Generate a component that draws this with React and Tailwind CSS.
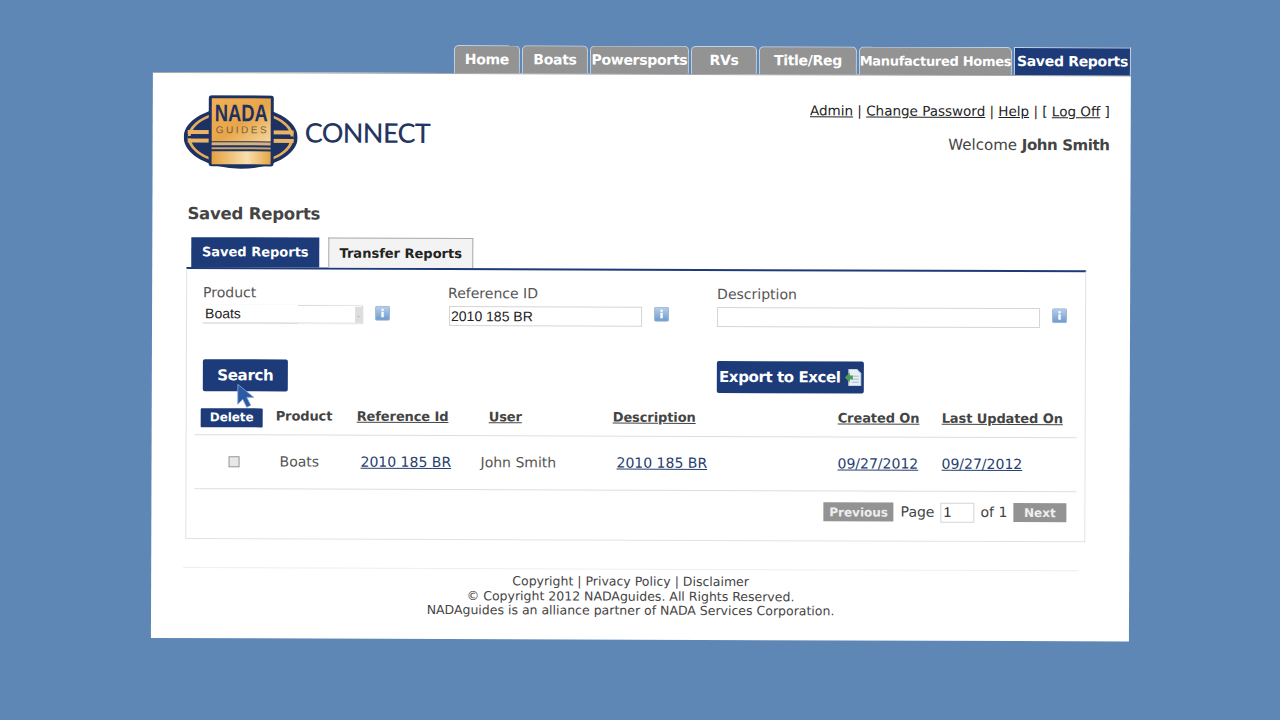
import React from "react";

const NAV_TABS = [
  { label: "Home", width: "w-[66px]", text: "text-[14px]" },
  { label: "Boats", width: "w-[66px]", text: "text-[14px]" },
  { label: "Powersports", width: "w-[99px]", text: "text-[14px]" },
  { label: "RVs", width: "w-[66px]", text: "text-[14px]" },
  { label: "Title/Reg", width: "w-[98px]", text: "text-[14px]" },
  { label: "Manufactured Homes", width: "w-[153px]", text: "text-[13px]" },
];

const InfoIcon = () => (
  <svg width="15" height="15" viewBox="0 0 15 15" className="shrink-0">
    <defs>
      <linearGradient id="infoGrad" x1="0" y1="0" x2="0" y2="1">
        <stop offset="0" stopColor="#b9d0ea" />
        <stop offset="1" stopColor="#6d9acb" />
      </linearGradient>
    </defs>
    <rect x="0.5" y="0.5" width="14" height="14" rx="1.5" fill="url(#infoGrad)" stroke="#9db8d6" />
    <rect x="6.3" y="3" width="2.4" height="2" fill="#fff" />
    <rect x="6.3" y="6" width="2.4" height="5.5" fill="#fff" />
  </svg>
);

const Logo = () => (
  <svg width="114" height="74" viewBox="0 0 114 74" className="shrink-0">
    <defs>
      <linearGradient id="gold" x1="0" y1="0" x2="1" y2="1">
        <stop offset="0" stopColor="#f0b055" />
        <stop offset="0.55" stopColor="#e9a648" />
        <stop offset="1" stopColor="#f6d79c" />
      </linearGradient>
      <linearGradient id="goldLow" x1="0" y1="0" x2="1" y2="0">
        <stop offset="0" stopColor="#e5a040" />
        <stop offset="0.6" stopColor="#f8dfae" />
        <stop offset="1" stopColor="#e5a548" />
      </linearGradient>
    </defs>
    <ellipse cx="57" cy="42" rx="57" ry="31.5" fill="#1d3163" />
    <ellipse cx="57" cy="42" rx="53" ry="28" fill="#e4ae5c" />
    <ellipse cx="57" cy="42" rx="50" ry="25.5" fill="#1d3163" />
    <rect x="4" y="35" width="106" height="4" fill="#e9b468" />
    <rect x="4" y="41" width="106" height="2.5" fill="#1d3163" />
    <rect x="4" y="43.5" width="106" height="4" fill="#e9b468" />
    <rect x="25" y="0" width="65" height="71" rx="3" fill="#1d3163" />
    <rect x="28" y="3" width="59" height="43" fill="url(#gold)" />
    <rect x="28" y="47" width="59" height="3" fill="#d9b27a" />
    <rect x="28" y="52" width="59" height="2" fill="#c8a36c" />
    <rect x="28" y="56" width="59" height="13" fill="url(#goldLow)" />
    <text x="31" y="26" textLength="53" lengthAdjust="spacingAndGlyphs" fontFamily="Liberation Sans, sans-serif" fontWeight="700" fontSize="24" fill="#1d3163">NADA</text>
    <text x="32" y="38" textLength="51" lengthAdjust="spacing" fontFamily="Liberation Sans, sans-serif" fontSize="10" fill="#6f5f47">GUIDES</text>
  </svg>
);

const ExcelIcon = () => (
  <svg width="18" height="18" viewBox="0 0 18 18" className="shrink-0">
    <path d="M5 1h8l4 4v12H5z" fill="#e8eff4" stroke="#c6d3dc" />
    <path d="M8 7h7v1.5H8zM8 10h7v1.5H8zM8 13h7v1.5H8z" fill="#b9cdd9" />
    <path d="M1 9l5-5v3h3v4H6v3z" fill="#4f9a57" />
  </svg>
);

const Cursor = () => (
  <svg width="22" height="26" viewBox="0 0 22 26" className="absolute left-[33px] top-[24px]">
    <path d="M2 1l0 20 5-5 4 8 4-2-4-8 7 0z" fill="#2c5aa6" stroke="#8aa6d0" strokeWidth="0.8" />
  </svg>
);

export default function App() {
  return (
    <div className="w-[1280px] h-[720px] overflow-hidden bg-[#5f87b5] pt-[44px] font-['DejaVu_Sans',sans-serif] text-[#444]">
      <div className="w-[978px] ml-[153px] origin-top-left rotate-[0.2deg]">
        {/* top nav */}
        <nav className="flex justify-end gap-[2px] h-[28px] pr-0">
          {NAV_TABS.map((tab) => (
            <div
              key={tab.label}
              className={`${tab.width} ${tab.text} h-[28px] flex items-center justify-center rounded-t-[5px] border border-b-0 border-[#c4d2e2] bg-[#939393] font-bold text-white whitespace-nowrap tracking-[-0.3px]`}
            >
              {tab.label}
            </div>
          ))}
          <div className="w-[117px] h-[28px] flex items-center justify-center border border-b-0 border-[#c4d2e2] bg-[#1d3b78] text-[14px] font-bold text-white whitespace-nowrap tracking-[-0.3px]">
            Saved Reports
          </div>
        </nav>

        {/* main card */}
        <div className="h-[566px] bg-white border-t border-[#a8a8a8]">
          <header className="h-[131px] flex justify-between pl-[31px] pr-[21px] pt-[22px]">
            <div className="flex items-center gap-[7px] h-[74px]">
              <Logo />
              <span className="font-['Lato',sans-serif] text-[27px] font-medium tracking-[-0.6px] text-[#24365f]">CONNECT</span>
            </div>
            <div className="flex flex-col items-end pt-[3px]">
              <div className="text-[13.5px] leading-[20px] text-[#222]">
                <span className="underline">Admin</span> | <span className="underline">Change Password</span> | <span className="underline">Help</span> | [ <span className="underline">Log Off</span> ]
              </div>
              <div className="mt-[14px] text-[15px] leading-[20px] text-[#444]">
                Welcome <span className="font-bold tracking-[-0.4px]">John Smith</span>
              </div>
            </div>
          </header>

          <h1 className="ml-[35px] text-[16.5px] leading-[20px] font-bold text-[#444] tracking-[-0.2px]">Saved Reports</h1>

          <div className="ml-[39px] mt-[13px] flex gap-[9px] h-[30px]">
            <div className="w-[128px] flex items-center justify-center bg-[#1d3b78] text-[13px] font-bold text-white">Saved Reports</div>
            <div className="w-[145px] flex items-center justify-center border border-b-0 border-[#aaa] bg-[#f3f3f3] text-[13px] font-bold text-[#222]">Transfer Reports</div>
          </div>

          {/* panel */}
          <section className="ml-[34px] w-[900px] h-[272px] border-x border-b border-[#e2e2e2] border-t-2 border-t-[#1d3b78] px-[8px]">
            <div className="flex pl-[8px] pt-[13px]">
              <div className="w-[245px]">
                <div className="text-[14px] leading-[20px] text-[#555]">Product</div>
                <div className="mt-[3px] flex items-start gap-[12px]">
                  <div className="w-[160px] h-[18px] flex items-center justify-between border-b border-r border-[#ddd] shadow-[0_0_1px_#bbb] pl-[2px] font-['Liberation_Sans',sans-serif] text-[14px] text-[#222]">
                    Boats
                    <span className="w-[7px] h-[16px] bg-[#ddd] text-[8px] leading-[16px] text-center text-[#555]">.</span>
                  </div>
                  <InfoIcon />
                </div>
              </div>
              <div className="w-[269px]">
                <div className="text-[14px] leading-[20px] text-[#555]">Reference ID</div>
                <div className="mt-[3px] flex items-start gap-[12px]">
                  <input
                    readOnly
                    value="2010 185 BR"
                    className="ml-[1px] w-[193px] h-[20px] border border-[#d5d5d5] px-[1px] font-['Liberation_Sans',sans-serif] text-[14px] text-[#222] outline-none"
                  />
                  <InfoIcon />
                </div>
              </div>
              <div>
                <div className="text-[14px] leading-[20px] text-[#555]">Description</div>
                <div className="mt-[3px] flex items-start gap-[12px]">
                  <input readOnly value="" className="w-[323px] h-[20px] border border-[#d5d5d5] outline-none" />
                  <InfoIcon />
                </div>
              </div>
            </div>

            <div className="flex pl-[8px] mt-[34px]">
              <button className="relative w-[85px] h-[32px] rounded-[2px] bg-[#1d3b78] text-[15px] font-bold text-white tracking-[-0.3px]">
                Search
                <Cursor />
              </button>
              <button className="ml-[429px] w-[147px] h-[32px] flex items-center justify-center gap-[3px] rounded-[2px] bg-[#1d3b78] text-[15px] font-bold text-white tracking-[-0.4px] whitespace-nowrap">
                Export to Excel
                <ExcelIcon />
              </button>
            </div>

            {/* results */}
            <div className="mt-[16px] h-[28px] grid grid-cols-[81px_81px_132px_124px_225px_104px_138px] items-center border-b border-[#ddd] text-[13px] font-bold text-[#444] tracking-[-0.1px]">
              <div className="pl-[6px] self-start">
                <button className="w-[62px] h-[19px] rounded-[1px] bg-[#1d3b78] text-[12px] font-bold text-white">Delete</button>
              </div>
              <div className="self-start leading-[18px]">Product</div>
              <div className="self-start leading-[18px] underline">Reference Id</div>
              <div className="self-start leading-[18px] underline">User</div>
              <div className="self-start leading-[18px] underline">Description</div>
              <div className="self-start leading-[18px] underline">Created On</div>
              <div className="self-start leading-[18px] underline whitespace-nowrap">Last Updated On</div>
            </div>
            <div className="h-[54px] grid grid-cols-[85px_81px_120px_136px_221px_104px_1fr] items-center border-b border-[#ddd] text-[14px] text-[#555]">
              <div className="pl-[34px]">
                <span className="block w-[11px] h-[11px] border border-[#999] bg-[#e8e8e8]"></span>
              </div>
              <div>Boats</div>
              <div className="underline text-[#27406f]">2010 185 BR</div>
              <div>John Smith</div>
              <div className="underline text-[#27406f]">2010 185 BR</div>
              <div className="underline text-[#27406f]">09/27/2012</div>
              <div className="underline text-[#27406f]">09/27/2012</div>
            </div>

            <div className="mt-[10px] flex items-center justify-end pr-[10px] text-[14px] text-[#444]">
              <button className="w-[70px] h-[19px] bg-[#939393] text-[12px] font-bold text-[#eee]">Previous</button>
              <span className="ml-[7px]">Page</span>
              <input readOnly value="1" className="ml-[6px] w-[34px] h-[20px] border border-[#d5d5d5] px-[2px] font-['Liberation_Sans',sans-serif] text-[14px] text-[#222] outline-none" />
              <span className="ml-[6px]">of 1</span>
              <button className="ml-[6px] w-[53px] h-[19px] bg-[#939393] text-[12px] font-bold text-[#eee]">Next</button>
            </div>
          </section>

          <footer className="ml-[32px] w-[895px] mt-[28px] border-t border-[#eee] pt-[5px] text-center text-[12.5px] leading-[14.5px] text-[#444]">
            <div>Copyright | Privacy Policy | Disclaimer</div>
            <div>© Copyright 2012 NADAguides. All Rights Reserved.</div>
            <div>NADAguides is an alliance partner of NADA Services Corporation.</div>
          </footer>
        </div>
      </div>
    </div>
  );
}
